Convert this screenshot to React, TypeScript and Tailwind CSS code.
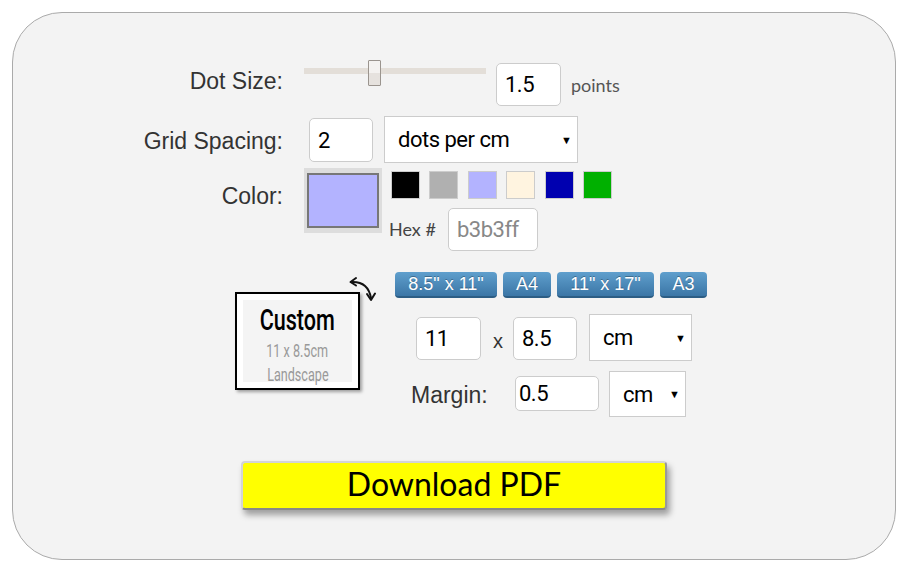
import React from "react";

const swatches = ["#000000", "#b0b0b0", "#b3b3ff", "#fff4e0", "#0000b0", "#00b000"];
const sizes = [
  { label: "8.5\" x 11\"", w: "w-[102px]" },
  { label: "A4", w: "w-[48px]" },
  { label: "11\" x 17\"", w: "w-[97px]" },
  { label: "A3", w: "w-[47px]" },
];

const labelFont = { fontFamily: '"Liberation Sans", Arial, sans-serif' };
const inputFont = { fontFamily: 'Roboto, "Liberation Sans", sans-serif' };
const softFont = { fontFamily: 'Lato, "Open Sans", sans-serif' };
const narrowFont = { fontFamily: 'Roboto, "Liberation Sans", sans-serif' };

function Field({ value, className }: { value: string; className: string }) {
  return (
    <input
      defaultValue={value}
      style={inputFont}
      className={`rounded-[5px] border border-[#cccccc] bg-white pl-[8px] text-[22px] tracking-[-0.5px] text-black outline-none ${className}`}
    />
  );
}

function Dropdown({ value, className }: { value: string; className: string }) {
  return (
    <div className={`relative ${className}`}>
      <select
        defaultValue={value}
        style={inputFont}
        className="h-full w-full appearance-none border border-[#cccccc] bg-white pl-[13px] text-[22px] tracking-[-0.5px] text-black outline-none"
      >
        <option>{value}</option>
      </select>
      <span className="pointer-events-none absolute right-[6px] top-1/2 -translate-y-1/2 text-[11px] text-black">
        ▼
      </span>
    </div>
  );
}

function RotateArrow() {
  return (
    <svg
      width="32"
      height="28"
      viewBox="0 0 32 28"
      className="absolute left-[112px] top-[-16px]"
      fill="none"
      stroke="#111"
      strokeWidth="2"
      strokeLinecap="round"
      strokeLinejoin="round"
    >
      <path d="M4 6 Q 21 5 24 22" />
      <path d="M9 2 L3.5 6 L9 9.5" />
      <path d="M20 18 L24 24 L28 17.5" />
    </svg>
  );
}

export default function App() {
  return (
    <div className="min-h-[573px] bg-white pt-[12px]">
      <div className="ml-[12px] h-[548px] w-[884px] rounded-[50px] border border-[#aaaaaa] bg-[#f3f3f3] pt-[47px]">
        {/* dot size */}
        <div className="flex items-start">
          <div style={labelFont} className="mt-[4px] w-[270px] text-right text-[23px] text-[#333333]">
            Dot Size:
          </div>
          <div className="relative ml-[21px] h-[26px] w-[182px]">
            <div className="absolute left-0 right-0 top-[8px] h-[6px] bg-[#e3ded8]" />
            <div className="absolute left-[64px] top-0 h-[26px] w-[13px] rounded-[1px] border border-[#9a948e] bg-gradient-to-b from-[#f4f2f0] from-50% to-[#e6e2de] to-50%" />
          </div>
          <Field value="1.5" className="ml-[10px] mt-[3px] h-[43px] w-[65px]" />
          <div style={softFont} className="ml-[10px] mt-[12px] text-[18px] text-[#555555]">
            points
          </div>
        </div>

        {/* grid spacing */}
        <div className="mt-[10px] flex items-start">
          <div style={labelFont} className="mt-[8px] w-[270px] text-right text-[23px] text-[#333333]">
            Grid Spacing:
          </div>
          <Field value="2" className="ml-[26px] mt-[2px] h-[44px] w-[64px]" />
          <Dropdown value="dots per cm" className="ml-[11px] h-[47px] w-[194px]" />
        </div>

        {/* colour */}
        <div className="mt-[5px] flex items-start">
          <div style={labelFont} className="mt-[11px] w-[270px] text-right text-[23px] text-[#333333]">
            Color:
          </div>
          <div className="ml-[21px] h-[65px] w-[78px] bg-[#dddddd] pl-[3px] pt-[5px]">
            <div className="h-[55px] w-[72px] border-2 border-[#777777] bg-[#b3b3ff]" />
          </div>
          <div className="ml-[7px] flex flex-col">
            <div className="ml-[2px] mt-[3px] flex gap-[9.4px]">
              {swatches.map((c) => (
                <div key={c} className="h-[28px] w-[29px] border border-[#cccccc]" style={{ backgroundColor: c }} />
              ))}
            </div>
            <div className="mt-[9px] flex items-center">
              <span style={softFont} className="w-[49px] text-[18px] text-[#444444]">
                Hex #
              </span>
              <input
                defaultValue="b3b3ff"
                style={inputFont}
                className="ml-[10px] h-[43px] w-[90px] rounded-[5px] border border-[#cccccc] bg-white pl-[8px] text-[22px] tracking-[-0.5px] text-[#888888] outline-none"
              />
            </div>
          </div>
        </div>

        {/* page size */}
        <div className="mt-[21px] flex items-start">
          <div className="relative ml-[222px] mt-[20px]">
            <div className="h-[98px] w-[125px] border-2 border-black bg-white p-[6px] shadow-[2px_2px_3px_rgba(0,0,0,0.35)]">
              <div className="flex h-full flex-col items-center bg-[#f4f4f4] pt-[3px]">
                <div
                  style={narrowFont}
                  className="scale-x-[0.72] text-[30px] font-medium leading-[34px] text-black"
                >
                  Custom
                </div>
                <div
                  style={narrowFont}
                  className="mt-[3px] scale-x-[0.7] text-[18px] leading-[22px] text-[#999999]"
                >
                  11 x 8.5cm
                </div>
                <div
                  style={narrowFont}
                  className="mt-[2px] scale-x-[0.7] text-[18px] leading-[22px] text-[#999999]"
                >
                  Landscape
                </div>
              </div>
            </div>
            <RotateArrow />
          </div>

          <div className="ml-[35px] flex flex-col">
            <div className="flex gap-[6px]">
              {sizes.map((s) => (
                <button
                  key={s.label}
                  style={labelFont}
                  className={`${s.w} h-[26px] rounded-[4px] border-b-2 border-[#2c5d84] bg-gradient-to-b from-[#5f9fcd] to-[#3b76a6] text-[18px] leading-[22px] text-white [text-shadow:0_-1px_0_rgba(0,0,0,0.3)]`}
                >
                  {s.label}
                </button>
              ))}
            </div>

            <div className="mt-[16px] flex items-start">
              <Field value="11" className="ml-[21px] mt-[3px] h-[43px] w-[65px]" />
              <span style={labelFont} className="ml-[12px] mt-[12px] text-[20px] text-[#333333]">
                x
              </span>
              <Field value="8.5" className="ml-[10px] mt-[3px] h-[43px] w-[64px]" />
              <Dropdown value="cm" className="ml-[12px] h-[47px] w-[103px]" />
            </div>

            <div className="mt-[10px] flex items-start">
              <span style={labelFont} className="ml-[16px] mt-[7px] w-[78px] text-[23px] text-[#333333]">
                Margin:
              </span>
              <input
                defaultValue="0.5"
                style={inputFont}
                className="ml-[26px] mt-[5px] h-[35px] w-[84px] rounded-[5px] border border-[#cccccc] bg-white pl-[3px] text-[22px] tracking-[-0.5px] text-black outline-none"
              />
              <Dropdown value="cm" className="ml-[10px] h-[46px] w-[77px]" />
            </div>
          </div>
        </div>

        {/* download */}
        <button
          style={{ fontFamily: 'Lato, "Open Sans", sans-serif' }}
          className="ml-[228px] mt-[44px] flex h-[49px] w-[426px] items-start justify-center rounded-[4px] border-2 border-[#d4d4d4] border-b-[#888888] border-r-[#999999] bg-[#ffff00] pt-[3px] text-[32px] leading-[36px] text-black shadow-[3px_5px_6px_rgba(0,0,0,0.35)]"
        >
          Download PDF
        </button>
      </div>
    </div>
  );
}
